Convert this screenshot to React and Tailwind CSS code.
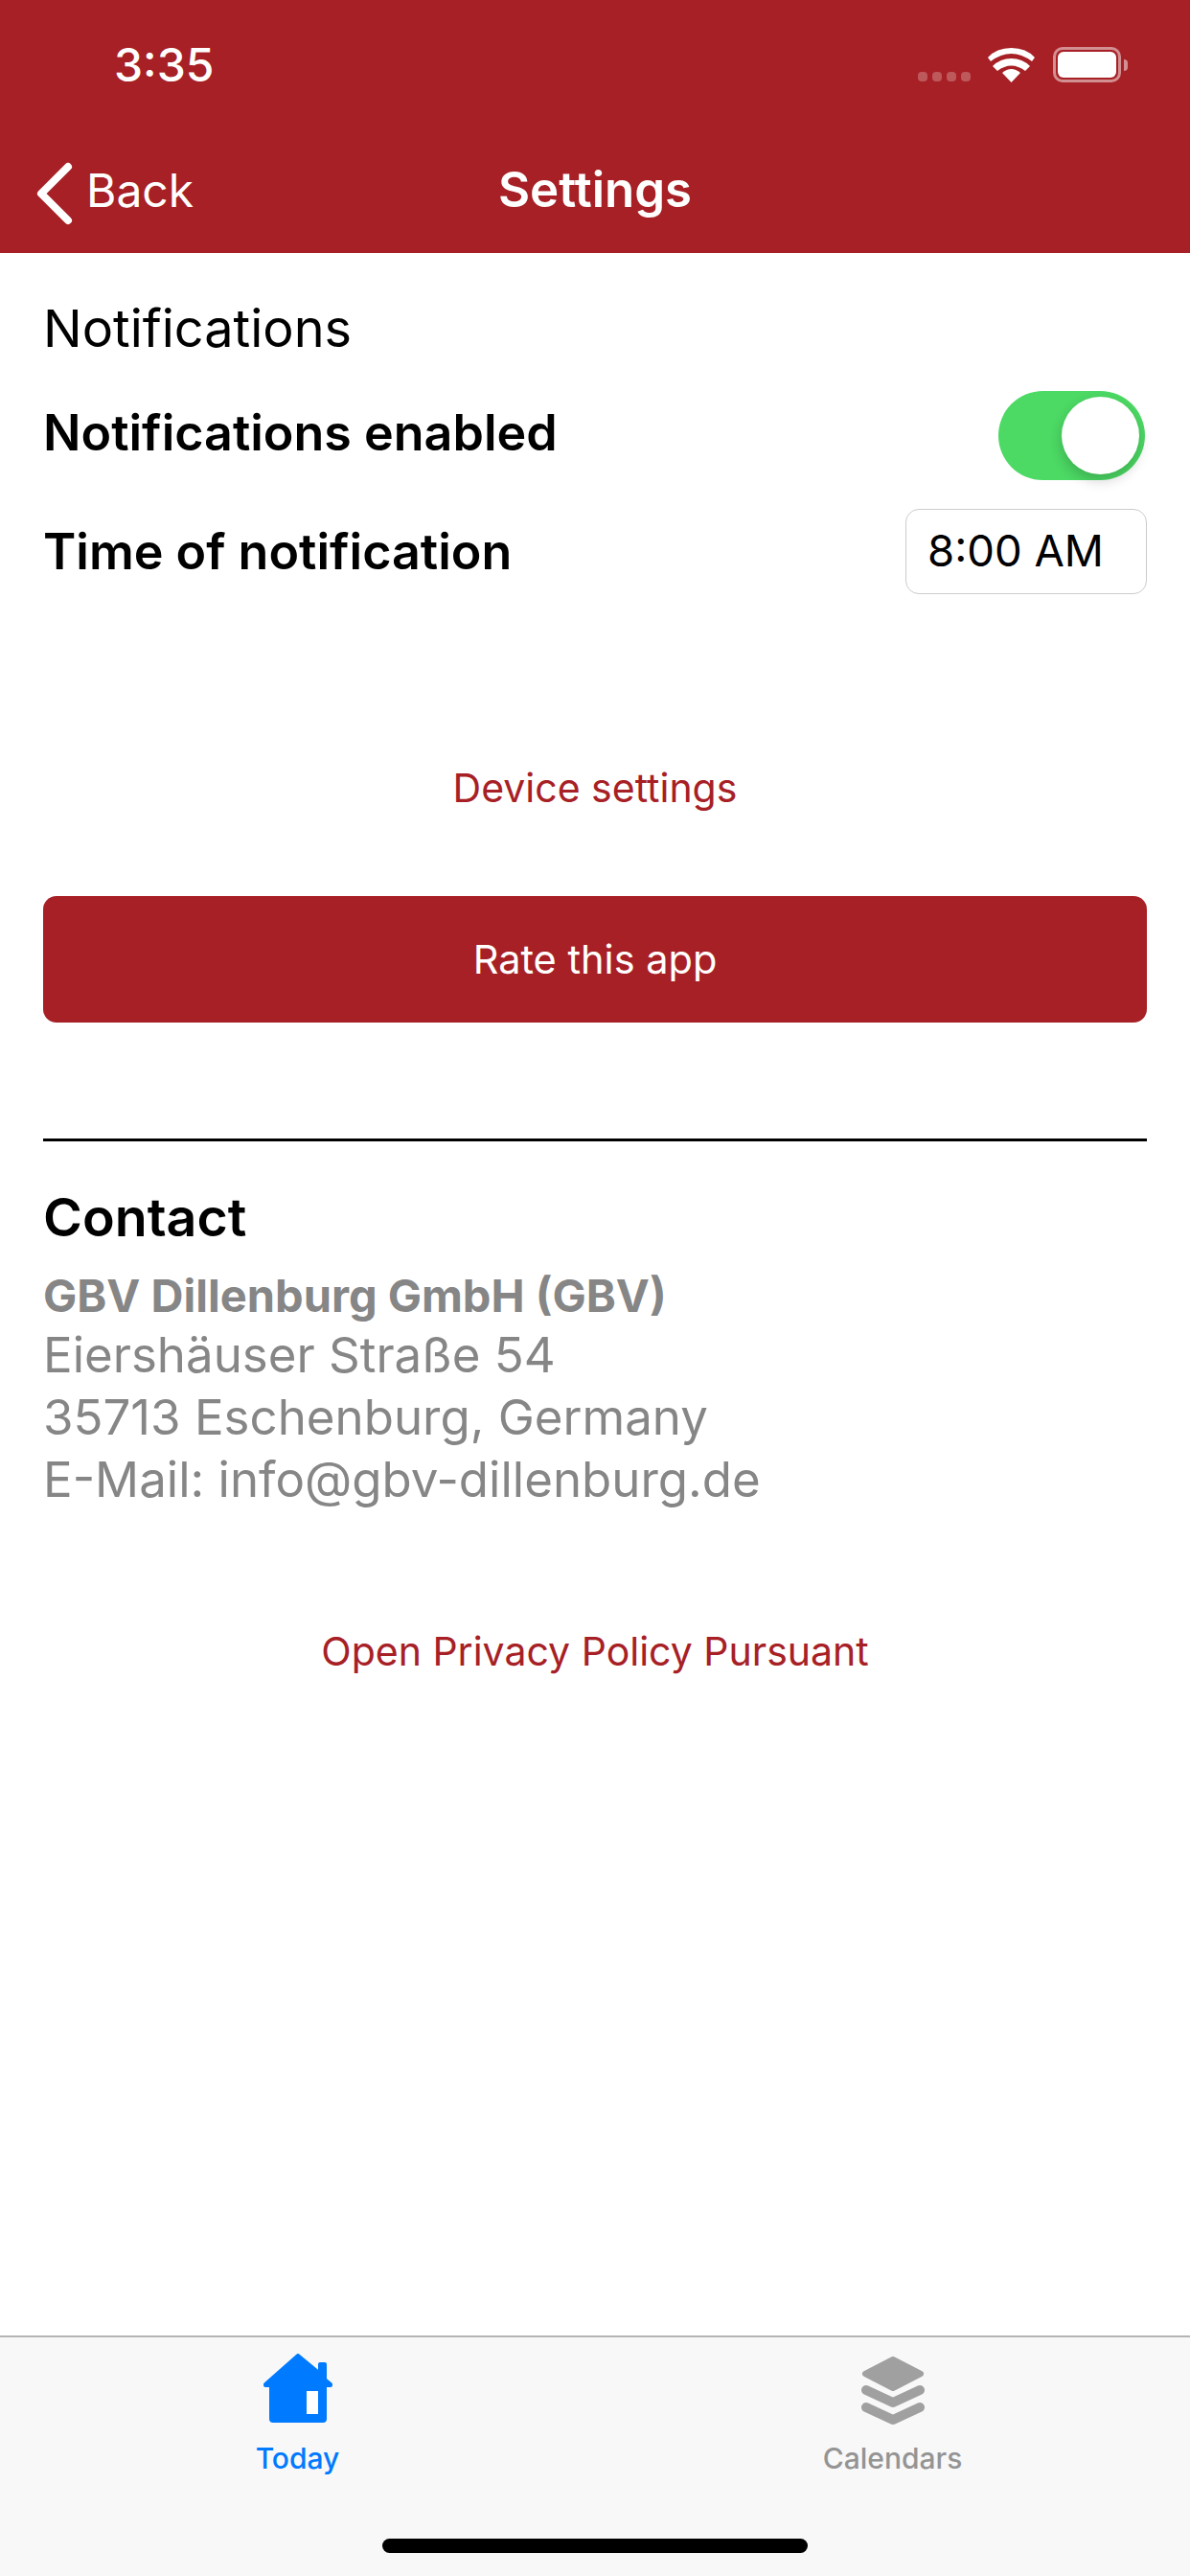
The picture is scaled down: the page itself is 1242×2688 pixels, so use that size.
function Home() {
  return (
    <svg width="72" height="72" viewBox="0 0 72 72">
      <path
        fill="#007aff"
        stroke="#007aff"
        strokeWidth="4"
        strokeLinejoin="round"
        d="M36 2 L59 21 V11 H64 V27 L70 32 V33 H64 V68 Q64 70 62 70 H10 Q8 70 8 68 V33 H2 V32 Z"
      />
      <rect x="45" y="39" width="12" height="24" fill="#ffffff" />
    </svg>
  );
}

function Layers() {
  return (
    <svg width="66" height="72" viewBox="0 0 66 72" fill="none" stroke="#a0a0a0" strokeLinejoin="round" strokeLinecap="round">
      <path d="M33 3 L62 18 L33 33 L4 18 Z" fill="#a0a0a0" strokeWidth="6" />
      <path d="M5 35 L33 48 L61 35" strokeWidth="10" />
      <path d="M5 53 L33 66 L61 53" strokeWidth="10" />
    </svg>
  );
}

export default function App() {
  return (
    <div className="w-[1242px] h-[2688px] flex flex-col bg-white font-['Inter','Roboto',sans-serif]">
      {/* Status bar + nav */}
      <header className="h-[264px] shrink-0 bg-[#a72025] text-white flex flex-col">
        <div className="h-[136px] flex justify-between pl-[119px] pr-[65px]">
          <span className="text-[48px] leading-[58px] font-medium mt-[39px]">3:35</span>
          <div className="flex items-end h-[37px] mt-[49px]">
            <div className="flex gap-[5px] mb-[1px]">
              <span className="w-[10px] h-[10px] rounded-[4px] bg-white/25" />
              <span className="w-[10px] h-[10px] rounded-[4px] bg-white/25" />
              <span className="w-[10px] h-[10px] rounded-[4px] bg-white/25" />
              <span className="w-[10px] h-[10px] rounded-[4px] bg-white/25" />
            </div>
            <svg className="ml-[18px]" width="49" height="36" viewBox="0 0 49 36" fill="white">
              <path d="M24.5 36 L15 26 Q24.5 18 34 26 Z" />
              <path d="M24.5 11 Q36 11 44 19 L39 24 Q24.5 13 10 24 L5 19 Q13 11 24.5 11 Z" />
              <path d="M24.5 0 Q40 0 49 10 L46 14 Q24.5 -2 3 14 L0 10 Q9 0 24.5 0 Z" />
            </svg>
            <div className="flex items-center ml-[19px]">
              <div className="w-[71px] h-[37px] rounded-[10px] border-[3px] border-white/50 p-[2px]">
                <div className="w-full h-full rounded-[6px] bg-white" />
              </div>
              <div className="w-[4px] h-[12px] ml-[3px] bg-white/50 rounded-r-full" />
            </div>
          </div>
        </div>
        <div className="relative flex-1 flex items-center justify-center pb-[4px]">
          <div className="absolute left-[38px] top-[33px] flex items-center">
            <svg width="38" height="66" viewBox="0 0 38 66" fill="none" stroke="white" strokeWidth="8" strokeLinecap="round" strokeLinejoin="round">
              <path d="M33 5 L5 33 L33 61" />
            </svg>
            <span className="text-[48px] leading-[58px] ml-[14px] mb-[6px]">Back</span>
          </div>
          <span className="text-[51px] leading-[60px] font-semibold">Settings</span>
        </div>
      </header>

      <main className="flex-1 px-[45px] pt-[46px]">
        <h2 className="text-[54px] leading-[66px] text-black">Notifications</h2>
        <div className="flex items-center justify-between h-[93px] mt-[32px]">
          <span className="text-[52px] leading-[62px] font-semibold text-black mb-[6px]">Notifications enabled</span>
          <div className="relative w-[153px] h-[93px] mr-[2px] rounded-full bg-[#4cd964]">
            <div className="absolute top-[6px] right-[6px] w-[81px] h-[81px] rounded-full bg-white shadow-[0_6px_14px_rgba(0,0,0,0.2)]" />
          </div>
        </div>
        <div className="flex items-center justify-between mt-[30px] h-[89px]">
          <span className="text-[52px] leading-[62px] font-semibold text-black">Time of notification</span>
          <div className="w-[252px] h-[89px] rounded-[14px] border border-[#cccccc] flex items-center pl-[22px] text-[45.5px] text-black">8:00 AM</div>
        </div>
        <div className="mt-[177px] text-center text-[41px] leading-[50px] text-[#a72025]">Device settings</div>
        <div className="mt-[88px] h-[132px] rounded-[14px] bg-[#a72025] text-white text-[41.5px] flex items-center justify-center">Rate this app</div>
        <div className="mt-[121px] h-[3px] bg-black" />
        <h2 className="mt-[39px] text-[55.5px] leading-[80px] font-semibold text-black">Contact</h2>
        <div className="mt-[13px] text-[#868686] text-[51px] leading-[65px]">
          <div className="font-bold text-[47px] leading-[58px]">GBV Dillenburg GmbH (GBV)</div>
          <div>Eiershäuser Straße 54</div>
          <div>35713 Eschenburg, Germany</div>
          <div>E-Mail: info@gbv-dillenburg.de</div>
        </div>
        <div className="mt-[122px] text-center text-[41px] leading-[50px] text-[#a72025]">Open Privacy Policy Pursuant</div>
      </main>

      {/* Tab bar */}
      <footer className="relative h-[251px] shrink-0 bg-[#f8f8f8] border-t-2 border-[#b4b4b4] flex">
        <div className="w-1/2 flex flex-col items-center pt-[17px]">
          <Home />
          <span className="text-[30px] leading-[36px] font-medium text-[#007aff] mt-[19px]">Today</span>
        </div>
        <div className="w-1/2 flex flex-col items-center pt-[20px]">
          <Layers />
          <span className="text-[30px] leading-[36px] font-medium text-[#949494] mt-[16px]">Calendars</span>
        </div>
        <div className="absolute bottom-[24px] left-[399px] w-[444px] h-[15px] rounded-full bg-black" />
      </footer>
    </div>
  );
}
